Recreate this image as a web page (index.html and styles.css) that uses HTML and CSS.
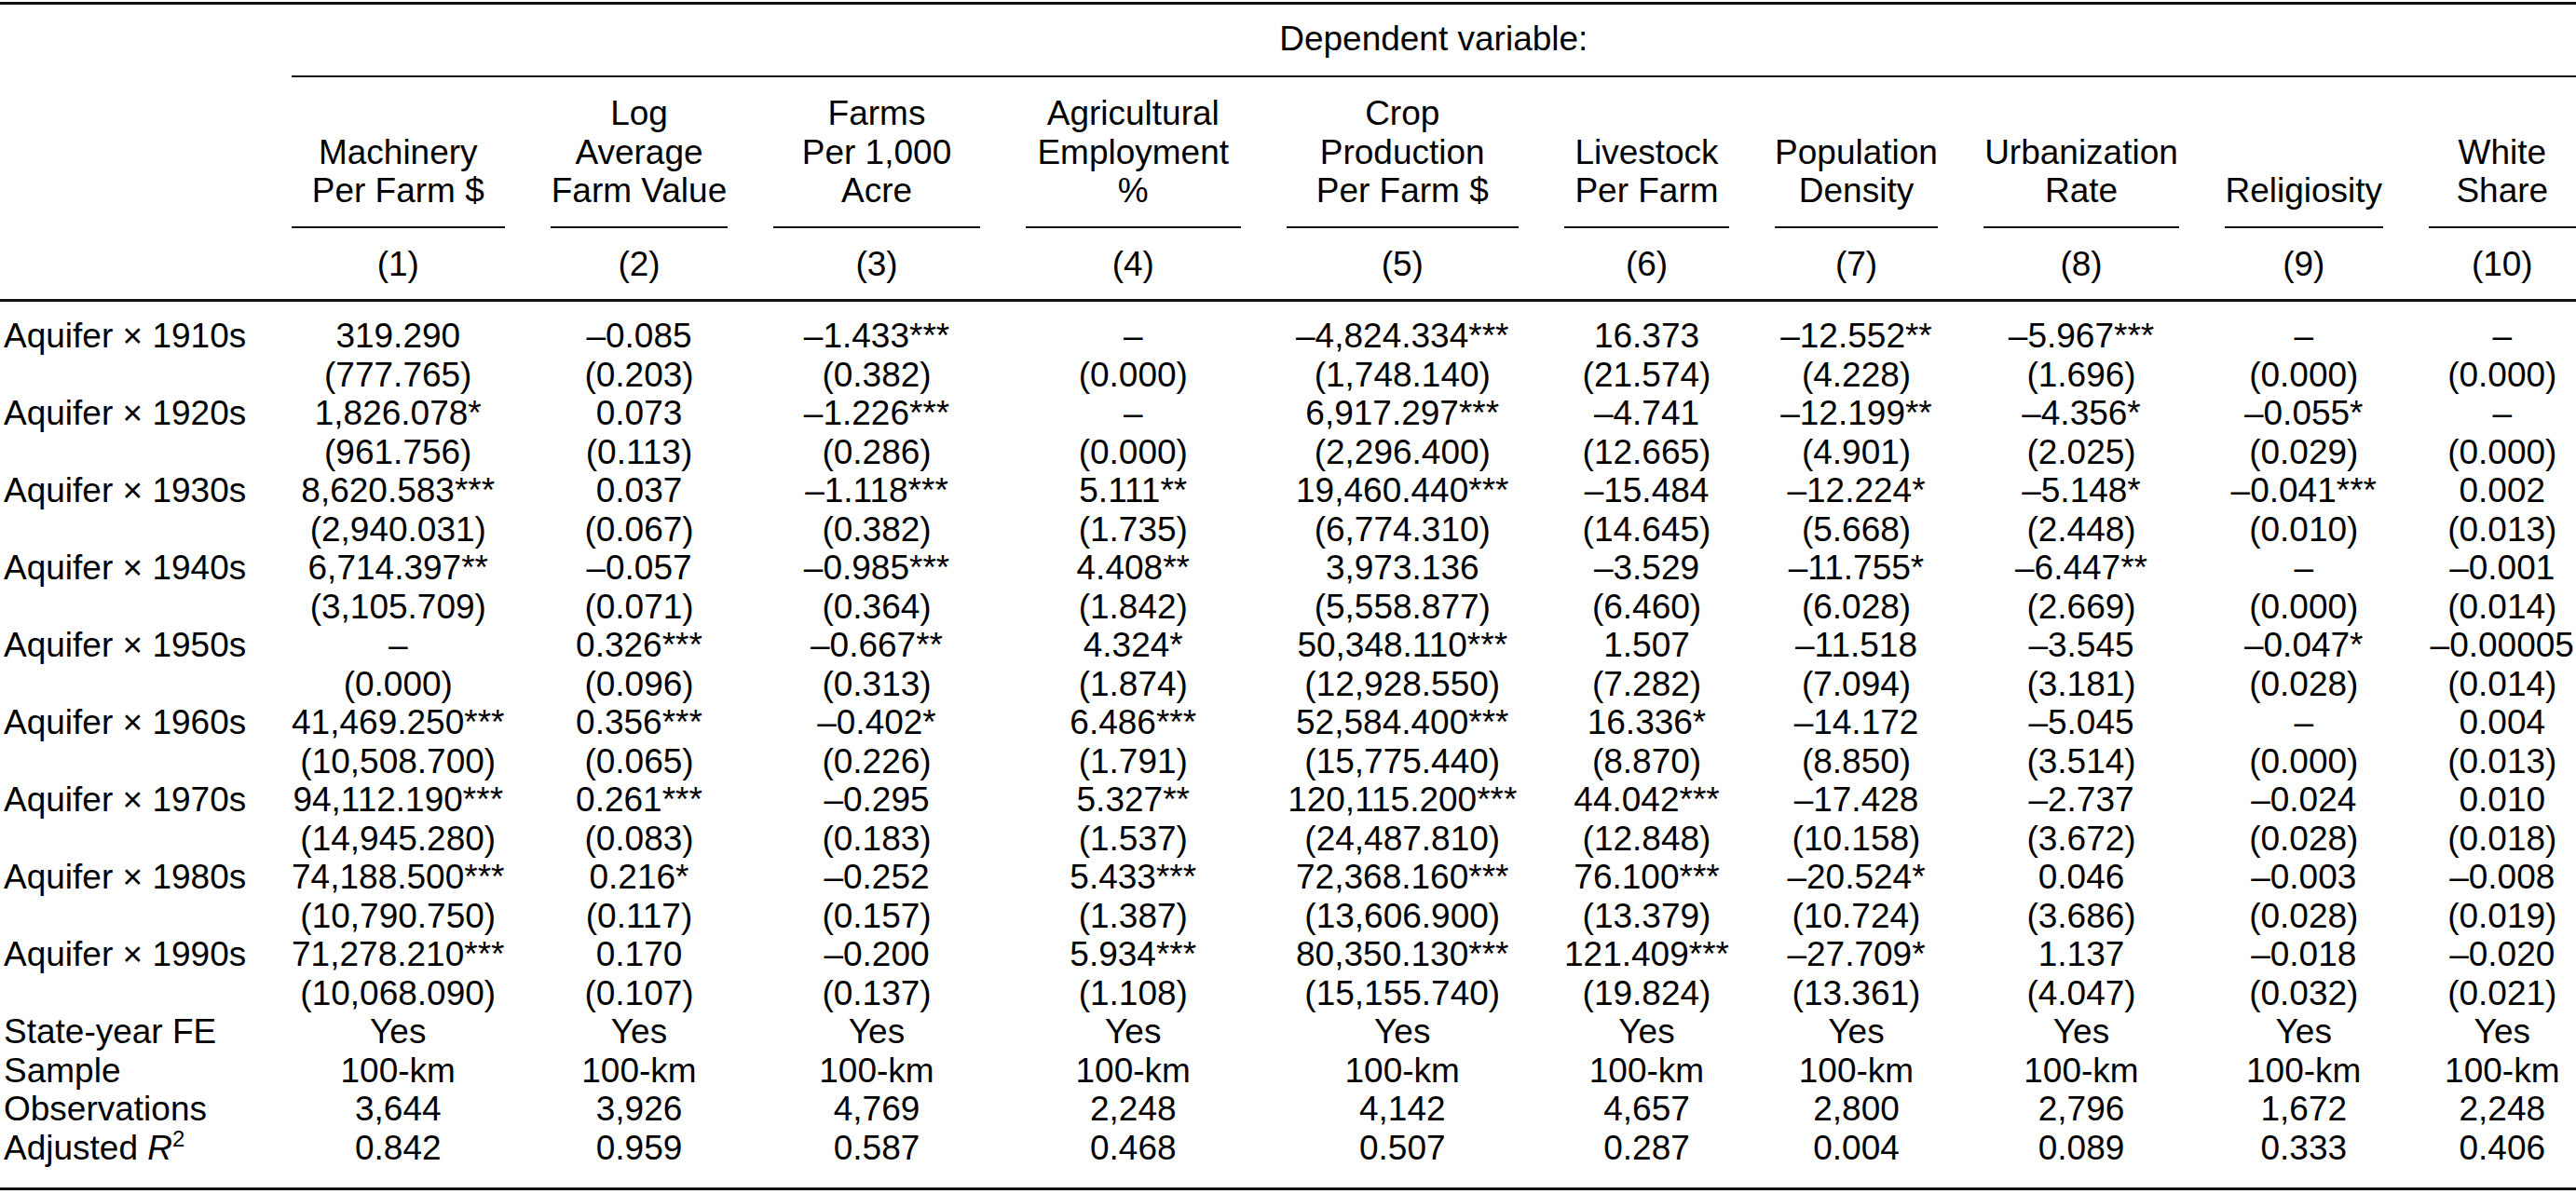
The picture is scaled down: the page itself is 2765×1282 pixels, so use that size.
FILE: index.html
```html
<!DOCTYPE html>
<html lang="en">
<head>
<meta charset="utf-8">
<title>Regression table</title>
<link rel="stylesheet" href="styles.css">
</head>
<body>
<div class="page">
<table class="reg">
  <colgroup>
    <col class="c0"><col class="c1"><col class="c2"><col class="c3"><col class="c4"><col class="c5">
    <col class="c6"><col class="c7"><col class="c8"><col class="c9"><col class="c10">
  </colgroup>
  <thead>
    <tr class="row-dep">
      <th class="stub"></th>
      <th class="dep" colspan="10"><div class="dep-in">Dependent variable:</div></th>
    </tr>
    <tr class="row-names">
      <th class="stub"></th>
      <th><div class="name">Machinery<br>Per Farm $</div></th>
      <th><div class="name">Log<br>Average<br>Farm Value</div></th>
      <th><div class="name">Farms<br>Per 1,000<br>Acre</div></th>
      <th><div class="name">Agricultural<br>Employment<br>%</div></th>
      <th><div class="name">Crop<br>Production<br>Per Farm $</div></th>
      <th><div class="name">Livestock<br>Per Farm</div></th>
      <th><div class="name">Population<br>Density</div></th>
      <th><div class="name">Urbanization<br>Rate</div></th>
      <th><div class="name">Religiosity</div></th>
      <th class="lastcol"><div class="name">White<br>Share</div></th>
    </tr>
    <tr class="row-num">
      <th class="stub"></th>
      <th>(1)</th><th>(2)</th><th>(3)</th><th>(4)</th><th>(5)</th>
      <th>(6)</th><th>(7)</th><th>(8)</th><th>(9)</th><th class="lastcol">(10)</th>
    </tr>
  </thead>
  <tbody>
    <tr class="first">
      <td class="stub">Aquifer × 1910s</td>
      <td>319.290</td><td>–0.085</td><td>–1.433***</td><td>–</td><td>–4,824.334***</td>
      <td>16.373</td><td>–12.552**</td><td>–5.967***</td><td>–</td><td class="lastcol">–</td>
    </tr>
    <tr>
      <td class="stub"></td>
      <td>(777.765)</td><td>(0.203)</td><td>(0.382)</td><td>(0.000)</td><td>(1,748.140)</td>
      <td>(21.574)</td><td>(4.228)</td><td>(1.696)</td><td>(0.000)</td><td class="lastcol">(0.000)</td>
    </tr>
    <tr>
      <td class="stub">Aquifer × 1920s</td>
      <td>1,826.078*</td><td>0.073</td><td>–1.226***</td><td>–</td><td>6,917.297***</td>
      <td>–4.741</td><td>–12.199**</td><td>–4.356*</td><td>–0.055*</td><td class="lastcol">–</td>
    </tr>
    <tr>
      <td class="stub"></td>
      <td>(961.756)</td><td>(0.113)</td><td>(0.286)</td><td>(0.000)</td><td>(2,296.400)</td>
      <td>(12.665)</td><td>(4.901)</td><td>(2.025)</td><td>(0.029)</td><td class="lastcol">(0.000)</td>
    </tr>
    <tr>
      <td class="stub">Aquifer × 1930s</td>
      <td>8,620.583***</td><td>0.037</td><td>–1.118***</td><td>5.111**</td><td>19,460.440***</td>
      <td>–15.484</td><td>–12.224*</td><td>–5.148*</td><td>–0.041***</td><td class="lastcol">0.002</td>
    </tr>
    <tr>
      <td class="stub"></td>
      <td>(2,940.031)</td><td>(0.067)</td><td>(0.382)</td><td>(1.735)</td><td>(6,774.310)</td>
      <td>(14.645)</td><td>(5.668)</td><td>(2.448)</td><td>(0.010)</td><td class="lastcol">(0.013)</td>
    </tr>
    <tr>
      <td class="stub">Aquifer × 1940s</td>
      <td>6,714.397**</td><td>–0.057</td><td>–0.985***</td><td>4.408**</td><td>3,973.136</td>
      <td>–3.529</td><td>–11.755*</td><td>–6.447**</td><td>–</td><td class="lastcol">–0.001</td>
    </tr>
    <tr>
      <td class="stub"></td>
      <td>(3,105.709)</td><td>(0.071)</td><td>(0.364)</td><td>(1.842)</td><td>(5,558.877)</td>
      <td>(6.460)</td><td>(6.028)</td><td>(2.669)</td><td>(0.000)</td><td class="lastcol">(0.014)</td>
    </tr>
    <tr>
      <td class="stub">Aquifer × 1950s</td>
      <td>–</td><td>0.326***</td><td>–0.667**</td><td>4.324*</td><td>50,348.110***</td>
      <td>1.507</td><td>–11.518</td><td>–3.545</td><td>–0.047*</td><td class="lastcol">–0.00005</td>
    </tr>
    <tr>
      <td class="stub"></td>
      <td>(0.000)</td><td>(0.096)</td><td>(0.313)</td><td>(1.874)</td><td>(12,928.550)</td>
      <td>(7.282)</td><td>(7.094)</td><td>(3.181)</td><td>(0.028)</td><td class="lastcol">(0.014)</td>
    </tr>
    <tr>
      <td class="stub">Aquifer × 1960s</td>
      <td>41,469.250***</td><td>0.356***</td><td>–0.402*</td><td>6.486***</td><td>52,584.400***</td>
      <td>16.336*</td><td>–14.172</td><td>–5.045</td><td>–</td><td class="lastcol">0.004</td>
    </tr>
    <tr>
      <td class="stub"></td>
      <td>(10,508.700)</td><td>(0.065)</td><td>(0.226)</td><td>(1.791)</td><td>(15,775.440)</td>
      <td>(8.870)</td><td>(8.850)</td><td>(3.514)</td><td>(0.000)</td><td class="lastcol">(0.013)</td>
    </tr>
    <tr>
      <td class="stub">Aquifer × 1970s</td>
      <td>94,112.190***</td><td>0.261***</td><td>–0.295</td><td>5.327**</td><td>120,115.200***</td>
      <td>44.042***</td><td>–17.428</td><td>–2.737</td><td>–0.024</td><td class="lastcol">0.010</td>
    </tr>
    <tr>
      <td class="stub"></td>
      <td>(14,945.280)</td><td>(0.083)</td><td>(0.183)</td><td>(1.537)</td><td>(24,487.810)</td>
      <td>(12.848)</td><td>(10.158)</td><td>(3.672)</td><td>(0.028)</td><td class="lastcol">(0.018)</td>
    </tr>
    <tr>
      <td class="stub">Aquifer × 1980s</td>
      <td>74,188.500***</td><td>0.216*</td><td>–0.252</td><td>5.433***</td><td>72,368.160***</td>
      <td>76.100***</td><td>–20.524*</td><td>0.046</td><td>–0.003</td><td class="lastcol">–0.008</td>
    </tr>
    <tr>
      <td class="stub"></td>
      <td>(10,790.750)</td><td>(0.117)</td><td>(0.157)</td><td>(1.387)</td><td>(13,606.900)</td>
      <td>(13.379)</td><td>(10.724)</td><td>(3.686)</td><td>(0.028)</td><td class="lastcol">(0.019)</td>
    </tr>
    <tr>
      <td class="stub">Aquifer × 1990s</td>
      <td>71,278.210***</td><td>0.170</td><td>–0.200</td><td>5.934***</td><td>80,350.130***</td>
      <td>121.409***</td><td>–27.709*</td><td>1.137</td><td>–0.018</td><td class="lastcol">–0.020</td>
    </tr>
    <tr>
      <td class="stub"></td>
      <td>(10,068.090)</td><td>(0.107)</td><td>(0.137)</td><td>(1.108)</td><td>(15,155.740)</td>
      <td>(19.824)</td><td>(13.361)</td><td>(4.047)</td><td>(0.032)</td><td class="lastcol">(0.021)</td>
    </tr>
    <tr>
      <td class="stub">State-year FE</td>
      <td>Yes</td><td>Yes</td><td>Yes</td><td>Yes</td><td>Yes</td>
      <td>Yes</td><td>Yes</td><td>Yes</td><td>Yes</td><td class="lastcol">Yes</td>
    </tr>
    <tr>
      <td class="stub">Sample</td>
      <td>100-km</td><td>100-km</td><td>100-km</td><td>100-km</td><td>100-km</td>
      <td>100-km</td><td>100-km</td><td>100-km</td><td>100-km</td><td class="lastcol">100-km</td>
    </tr>
    <tr>
      <td class="stub">Observations</td>
      <td>3,644</td><td>3,926</td><td>4,769</td><td>2,248</td><td>4,142</td>
      <td>4,657</td><td>2,800</td><td>2,796</td><td>1,672</td><td class="lastcol">2,248</td>
    </tr>
    <tr class="last">
      <td class="stub">Adjusted <i>R</i><sup>2</sup></td>
      <td>0.842</td><td>0.959</td><td>0.587</td><td>0.468</td><td>0.507</td>
      <td>0.287</td><td>0.004</td><td>0.089</td><td>0.333</td><td class="lastcol">0.406</td>
    </tr>
  </tbody>
</table>
</div>
</body>
</html>
```

FILE: styles.css
```css
html, body {
  margin: 0;
  padding: 0;
  background: #ffffff;
}
body {
  overflow: hidden;
}
.page {
  padding-top: 2px;
  width: 2765px;
}
.reg {
  width: 2765px;
  table-layout: fixed;
  border-collapse: separate;
  border-spacing: 0;
  font-family: "Liberation Sans", Arial, Helvetica, sans-serif;
  font-size: 37px;
  line-height: 41.5px;
  color: #000000;
}
.c0 { width: 288px; }
.c1 { width: 278.5px; }
.c2 { width: 239px; }
.c3 { width: 271px; }
.c4 { width: 279.5px; }
.c5 { width: 298.5px; }
.c6 { width: 226px; }
.c7 { width: 224px; }
.c8 { width: 259px; }
.c9 { width: 218.5px; }
.c10 { width: 183px; }

.reg th, .reg td {
  font-weight: normal;
  text-align: center;
  white-space: nowrap;
  padding: 0 24.5px;
  vertical-align: bottom;
}
.reg .stub {
  text-align: left;
  padding: 0 0 0 4px;
}
.reg .lastcol {
  padding-right: 0;
}

/* Dependent variable row */
.row-dep th {
  border-top: 3px solid #111111;
}
.reg th.dep {
  padding: 0 0 0 24.5px;
}
.dep-in {
  padding: 16.4px 0 18px;
  border-bottom: 2px solid #111111;
}

/* Column names row */
.name {
  padding: 18.4px 0 17.1px;
  border-bottom: 2px solid #111111;
}

/* Column numbers row */
.row-num th {
  padding-top: 18.4px;
  padding-bottom: 16.6px;
  border-bottom: 3px solid #111111;
}

/* Body */
.reg tbody tr.first td {
  padding-top: 16px;
}
.reg tbody tr.last td {
  padding-bottom: 22px;
  border-bottom: 3px solid #111111;
}
.reg sup {
  font-size: 24px;
  line-height: 0;
  vertical-align: 14px;
}
```
